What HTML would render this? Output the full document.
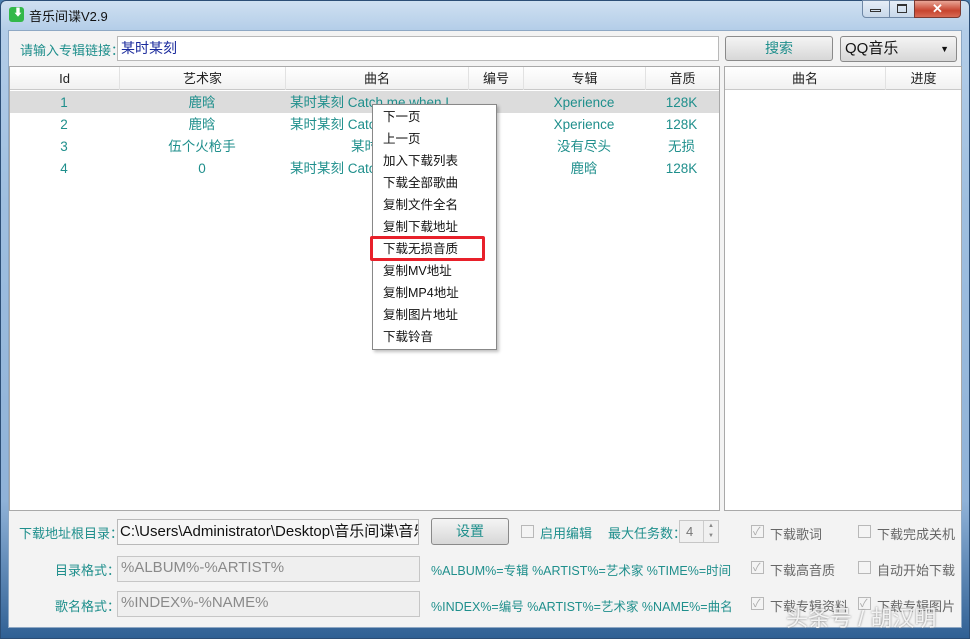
<!DOCTYPE html>
<html style="overflow:hidden;width:970px;height:639px"><head><meta charset="utf-8"><style>
*{margin:0;padding:0;box-sizing:border-box}
body{width:970px;height:639px;overflow:hidden;position:relative;background:#4d7fb0;font-family:"Liberation Sans","Noto Sans CJK SC",sans-serif;font-size:13px}
.a{position:absolute;white-space:nowrap}
.t{color:#1f8f8c}
.frame{left:0;top:0;width:970px;height:639px;background:linear-gradient(#cfe0f1,#b3cde8 30px,#9fbfe0 200px,#8fb2d8 500px,#2f5f93 639px);border:1px solid #2c4e76;border-radius:6px 6px 0 0}
.client{left:8px;top:30px;width:954px;height:598px;background:#f3f3f3;border:1px solid #8ea8c4}
.inp{background:#fff;border:1px solid #b9b9b9}
.dis{background:#efefef;border:1px solid #c6c6c6;color:#8a8a8a;font-size:15px;padding-left:3px;line-height:22px}
.btn{border:1px solid #8a8a8a;border-radius:3px;background:linear-gradient(#f4f4f4,#e6e6e6 50%,#d7d7d7);text-align:center;color:#1f8f8c;font-size:14px}
.hdr{background:linear-gradient(#fff,#f1f1f1);border-bottom:1px solid #c9c9c9;height:23px}
.hc{position:absolute;top:0;height:23px;line-height:23px;text-align:center;border-right:1px solid #e2e2e2;color:#222}
.c{position:absolute;text-align:center;height:22px;line-height:22px;font-size:13.5px;white-space:nowrap}
.mi{position:absolute;left:10px;font-size:12.5px;color:#111;height:22px;line-height:22px}
.cb{position:absolute;width:13px;height:13px;border:1px solid #b8b8b8;background:#f4f4f4}
.ck::after{content:"✓";position:absolute;left:1px;top:-3px;font-size:11px;color:#aaa}
.gl{color:#666;font-size:13px}
</style></head><body>
<div class="a frame"></div>
<div class="a" style="left:9px;top:7px;width:15px;height:15px;background:#33b84a;border-radius:3px"></div>
<div class="a" style="left:13px;top:9px;color:#fff;font-size:10px;line-height:10px">⬇</div>
<div class="a" style="left:29px;top:6px;font-size:13px;color:#111">音乐间谍V2.9</div>
<div class="a" style="left:862px;top:0;width:28px;height:18px;background:linear-gradient(#e6eef7,#c8d8ea);border:1px solid #6f88a6;border-radius:0 0 0 4px"></div>
<div class="a" style="left:870px;top:9px;width:11px;height:3px;border:1px solid #333"></div>
<div class="a" style="left:889px;top:0;width:26px;height:18px;background:linear-gradient(#e6eef7,#c8d8ea);border:1px solid #6f88a6"></div>
<div class="a" style="left:897px;top:4px;width:10px;height:9px;border:1px solid #333;border-top-width:2px"></div>
<div class="a" style="left:914px;top:0;width:47px;height:18px;background:linear-gradient(#e9a596,#c7442f 60%,#d86a55);border:1px solid #7a3a33;border-radius:0 0 4px 0;color:#fff;text-align:center;font-weight:bold;font-size:13px;line-height:16px">✕</div>
<div class="a client"></div>
<div class="a t" style="left:20px;top:40px;font-size:13px">请输入专辑链接：</div>
<div class="a inp" style="left:117px;top:36px;width:602px;height:25px;color:#1a2a9c;font-size:14px;padding-left:3px;line-height:23px">某时某刻</div>
<div class="a btn" style="left:725px;top:36px;width:108px;height:25px;line-height:23px">搜索</div>
<div class="a btn" style="left:840px;top:36px;width:117px;height:26px;line-height:24px;color:#111;font-size:15px;text-align:left;padding-left:4px">QQ音乐<span style="position:absolute;right:7px;top:0;font-size:9px">▼</span></div>
<div class="a" style="left:9px;top:66px;width:711px;height:445px;background:#fff;border:1px solid #a9a9a9">
<div class="hdr" style="position:relative">
<div class="hc" style="left:0;width:110px">Id</div>
<div class="hc" style="left:110px;width:166px">艺术家</div>
<div class="hc" style="left:276px;width:183px">曲名</div>
<div class="hc" style="left:459px;width:55px">编号</div>
<div class="hc" style="left:514px;width:122px">专辑</div>
<div class="hc" style="left:636px;width:73px;border:none">音质</div>
</div>
<div class="a" style="left:0;top:24px;width:709px;height:22px;background:#dcdcdc"></div>
</div>
<div class="a t" style="left:0;top:0">
<div class="c" style="left:9px;top:92px;width:110px">1</div><div class="c" style="left:119px;top:92px;width:166px">鹿晗</div><div class="c" style="left:290px;top:92px;width:180px;text-align:left">某时某刻 Catch me when I</div><div class="c" style="left:523px;top:92px;width:122px">Xperience</div><div class="c" style="left:645px;top:92px;width:73px">128K</div>
<div class="c" style="left:9px;top:114px;width:110px">2</div><div class="c" style="left:119px;top:114px;width:166px">鹿晗</div><div class="c" style="left:290px;top:114px;width:180px;text-align:left">某时某刻 Catch</div><div class="c" style="left:523px;top:114px;width:122px">Xperience</div><div class="c" style="left:645px;top:114px;width:73px">128K</div>
<div class="c" style="left:9px;top:136px;width:110px">3</div><div class="c" style="left:119px;top:136px;width:166px">伍个火枪手</div><div class="c" style="left:351px;top:136px;width:40px;text-align:left">某时</div><div class="c" style="left:523px;top:136px;width:122px">没有尽头</div><div class="c" style="left:645px;top:136px;width:73px">无损</div>
<div class="c" style="left:9px;top:158px;width:110px">4</div><div class="c" style="left:119px;top:158px;width:166px">0</div><div class="c" style="left:290px;top:158px;width:180px;text-align:left">某时某刻 Catch</div><div class="c" style="left:523px;top:158px;width:122px">鹿晗</div><div class="c" style="left:645px;top:158px;width:73px">128K</div>
</div>
<div class="a" style="left:724px;top:66px;width:238px;height:445px;background:#fff;border:1px solid #a9a9a9">
<div class="hdr" style="position:relative">
<div class="hc" style="left:0;width:161px">曲名</div>
<div class="hc" style="left:161px;width:75px;border:none">进度</div>
</div></div>
<div class="a" style="left:372px;top:104px;width:125px;height:246px;background:#fff;border:1px solid #888;box-shadow:2px 2px 3px rgba(0,0,0,.25)">
<div class="mi" style="top:1px">下一页</div>
<div class="mi" style="top:23px">上一页</div>
<div class="mi" style="top:45px">加入下载列表</div>
<div class="mi" style="top:67px">下载全部歌曲</div>
<div class="mi" style="top:89px">复制文件全名</div>
<div class="mi" style="top:111px">复制下载地址</div>
<div class="mi" style="top:133px">下载无损音质</div>
<div class="mi" style="top:155px">复制MV地址</div>
<div class="mi" style="top:177px">复制MP4地址</div>
<div class="mi" style="top:199px">复制图片地址</div>
<div class="mi" style="top:221px">下载铃音</div>
</div>
<div class="a" style="left:370px;top:236px;width:115px;height:25px;border:3px solid #e8202a;border-radius:2px"></div>
<div class="a t" style="left:19px;top:523px">下载地址根目录：</div>
<div class="a inp" style="left:117px;top:519px;width:302px;height:26px;font-size:15px;line-height:24px;padding-left:2px;color:#111;overflow:hidden;background:#f6f6f6">C:\Users\Administrator\Desktop\音乐间谍\音乐</div>
<div class="a btn" style="left:431px;top:518px;width:78px;height:27px;line-height:25px">设置</div>
<div class="cb" style="left:521px;top:525px"></div>
<div class="a t" style="left:540px;top:523px">启用编辑</div>
<div class="a t" style="left:608px;top:523px">最大任务数：</div>
<div class="a" style="left:679px;top:520px;width:40px;height:23px;border:1px solid #c6c6c6;background:#f0f0f0;color:#777;line-height:21px;padding-left:6px;font-size:13px">4</div>
<div class="a" style="left:703px;top:521px;width:15px;height:21px;border-left:1px solid #ccc;font-size:6px;color:#888;text-align:center;line-height:10px">▲<br>▼</div>
<div class="a t" style="left:55px;top:560px">目录格式：</div>
<div class="a dis" style="left:117px;top:556px;width:303px;height:26px">%ALBUM%-%ARTIST%</div>
<div class="a t" style="left:431px;top:560px;font-size:12.5px">%ALBUM%=专辑 %ARTIST%=艺术家 %TIME%=时间</div>
<div class="a t" style="left:55px;top:596px">歌名格式：</div>
<div class="a dis" style="left:117px;top:591px;width:303px;height:26px">%INDEX%-%NAME%</div>
<div class="a t" style="left:431px;top:596px;font-size:12.5px">%INDEX%=编号 %ARTIST%=艺术家 %NAME%=曲名</div>
<div class="cb ck" style="left:751px;top:525px"></div><div class="a gl" style="left:770px;top:524px">下载歌词</div>
<div class="cb ck" style="left:751px;top:561px"></div><div class="a gl" style="left:770px;top:560px">下载高音质</div>
<div class="cb ck" style="left:751px;top:597px"></div><div class="a gl" style="left:770px;top:596px">下载专辑资料</div>
<div class="cb" style="left:858px;top:525px"></div><div class="a gl" style="left:877px;top:524px">下载完成关机</div>
<div class="cb" style="left:858px;top:561px"></div><div class="a gl" style="left:877px;top:560px">自动开始下载</div>
<div class="cb ck" style="left:858px;top:597px"></div><div class="a gl" style="left:877px;top:596px">下载专辑图片</div>
<div class="a" style="left:786px;top:601px;font-size:22px;color:rgba(255,255,255,.85);text-shadow:0 0 2px #777">头条号 / 胡汉明</div>
</body></html>
